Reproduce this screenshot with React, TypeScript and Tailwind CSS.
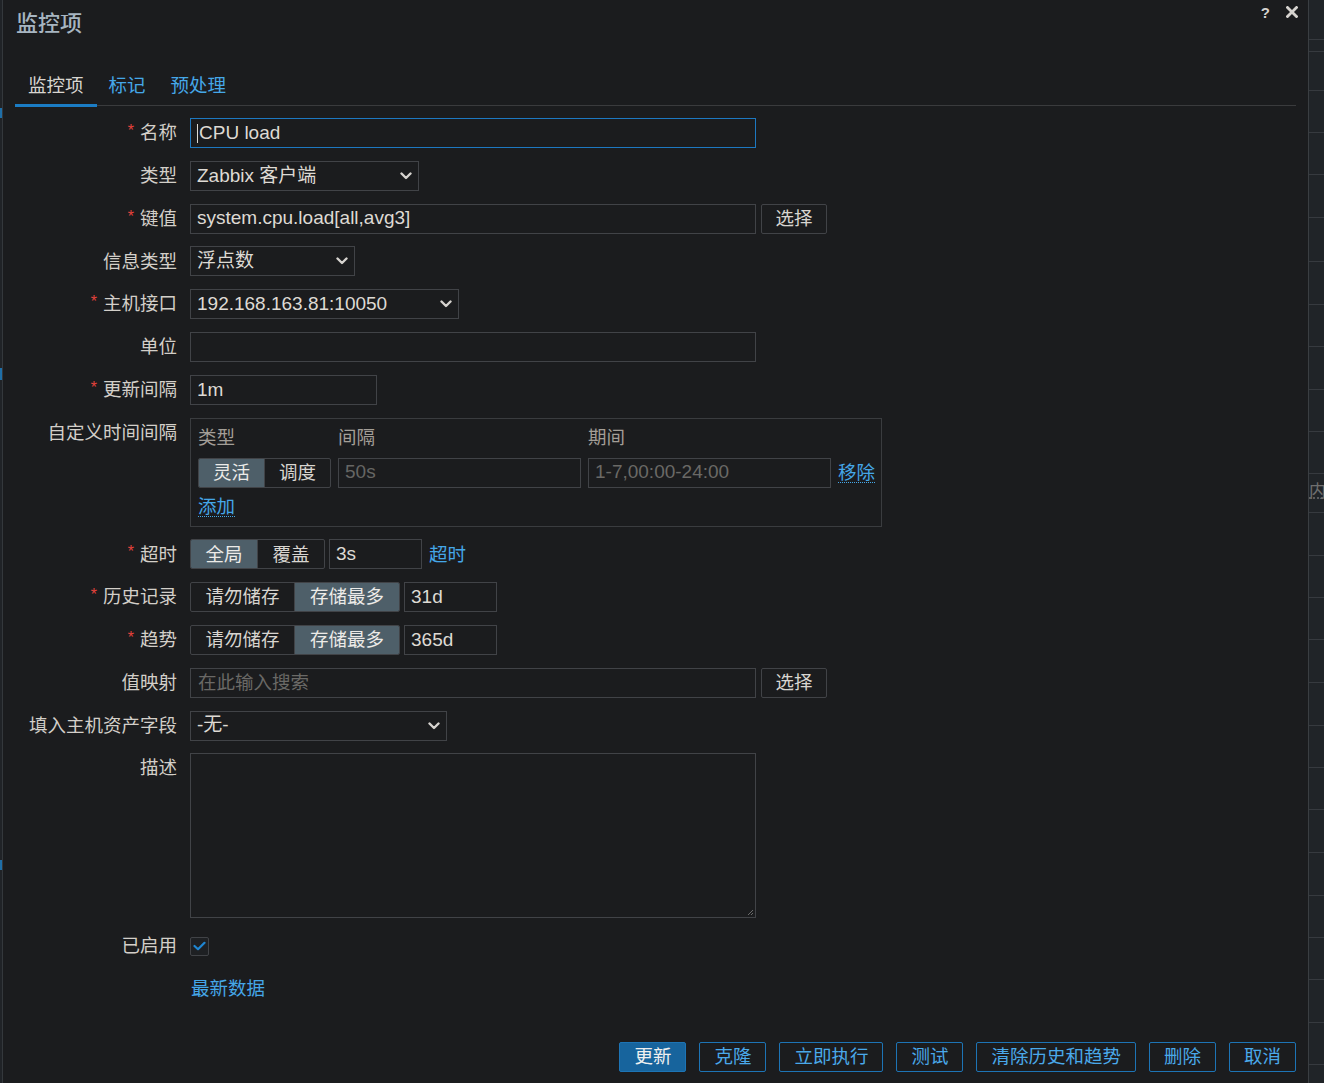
import React from "react";

const FONT = "font-['Liberation_Sans','Noto_Sans_CJK_SC',sans-serif]";

function Chevron() {
  return (
    <svg width="12" height="8" viewBox="0 0 12 8" className="shrink-0">
      <path d="M1.5 1.5 L6 6 L10.5 1.5" fill="none" stroke="#d6d3cf" strokeWidth="2.4" strokeLinecap="round" strokeLinejoin="round" />
    </svg>
  );
}

function Row({
  label,
  req,
  top,
  children,
}: {
  label: string;
  req?: boolean;
  top?: boolean;
  children: React.ReactNode;
}) {
  return (
    <div className={`flex ${top ? "items-start" : "items-center h-[30px]"} shrink-0`}>
      <div className="w-[174px] h-[30px] shrink-0 flex items-center justify-end text-[18.5px] text-[#d3cfc9] whitespace-nowrap">
        {req && <span className="text-[#e5423c] mr-[6px] text-[16px] relative top-[-2px]">*</span>}
        {label}
      </div>
      <div className="ml-[13px] flex items-center">{children}</div>
    </div>
  );
}

function Seg({ items, sel, widths }: { items: string[]; sel: number; widths: string[] }) {
  return (
    <div className="flex h-[30px] border border-[#414347] rounded-[2px] overflow-hidden">
      {items.map((t, i) => (
        <div
          key={t}
          className={`${widths[i]} h-full flex items-center justify-center text-[18.5px] whitespace-nowrap ${
            i === sel ? "bg-[#4e5f69] text-[#ecebe8]" : "text-[#d8d5d0]"
          } ${i > 0 ? "border-l border-[#414347]" : ""}`}
        >
          {t}
        </div>
      ))}
    </div>
  );
}

function Btn({ children }: { children: React.ReactNode }) {
  return (
    <div className="ml-[5px] w-[66px] h-[30px] border border-[#414347] rounded-[2px] flex items-center justify-center text-[18.5px] text-[#d8d5d0] whitespace-nowrap">
      {children}
    </div>
  );
}

const stripRows = [40, 12, 39, 42, 42, 43, 44, 43, 42, 43, 42, 42, 39, 43, 42, 42, 43, 43, 42, 42, 43, 43, 42, 42, 43, 42];

export default function App() {
  return (
    <div className={`w-[1324px] h-[1083px] flex bg-[#1b1c1e] overflow-hidden ${FONT}`}>
      {/* left page strip */}
      <div className="w-[3px] shrink-0 flex flex-col border-r border-[#34383c] bg-[#202327]">
        <div className="h-[108px]" />
        <div className="h-[10px] bg-[#1f6fa8]" />
        <div className="h-[250px]" />
        <div className="h-[12px] bg-[#1f6fa8]" />
        <div className="h-[480px]" />
        <div className="h-[10px] bg-[#1f6fa8]" />
      </div>

      {/* dialog */}
      <div className="flex-1 flex flex-col relative">
        {/* header */}
        <div className="h-[50px] flex items-start pl-[13px] pt-[9px]">
          <div className="text-[22px] leading-[30px] font-medium text-[#a7b5c1]">监控项</div>
        </div>
        <div className="absolute top-[5px] right-[38px] text-[15px] font-bold leading-[15px] text-[#d6d3cf]">?</div>
        <svg className="absolute top-[6px] right-[10px]" width="12" height="12" viewBox="0 0 12 12">
          <path d="M1.5 1.5 L10.5 10.5 M10.5 1.5 L1.5 10.5" stroke="#d6d3cf" strokeWidth="2.8" strokeLinecap="square" />
        </svg>

        {/* tabs */}
        <div className="mt-[13px] mx-[12px] flex items-end border-b border-[#3a3b3d]">
          <div className="h-[44px] px-[13px] pt-[11px] text-[18.5px] leading-[24px] text-[#d8d5d0] border-b-[3px] border-[#1b7cc4] mb-[-2px]">
            监控项
          </div>
          <div className="h-[42px] px-[12px] pt-[11px] text-[18.5px] leading-[24px] text-[#45a7e8]">标记</div>
          <div className="h-[42px] px-[13px] pt-[11px] text-[18.5px] leading-[24px] text-[#45a7e8]">预处理</div>
        </div>

        {/* form */}
        <div className="mt-[12px] flex flex-col gap-[12.8px]">
          <Row label="名称" req>
            <div className="w-[566px] h-[30px] border border-[#1d78c0] px-[6px] flex items-center text-[19px] text-[#dedad4]">
              <span className="w-[1px] h-[19px] bg-[#dedad4] mr-[1px]" />
              CPU load
            </div>
          </Row>
          <Row label="类型">
            <div className="w-[229px] h-[30px] border border-[#414347] pl-[6px] pr-[6px] flex items-center justify-between text-[19px] text-[#dedad4]">
              <span>Zabbix 客户端</span>
              <Chevron />
            </div>
          </Row>
          <Row label="键值" req>
            <div className="w-[566px] h-[30px] border border-[#414347] px-[6px] flex items-center text-[19px] text-[#dedad4]">
              system.cpu.load[all,avg3]
            </div>
            <Btn>选择</Btn>
          </Row>
          <Row label="信息类型">
            <div className="w-[165px] h-[30px] border border-[#414347] pl-[6px] pr-[6px] flex items-center justify-between text-[19px] text-[#dedad4]">
              <span>浮点数</span>
              <Chevron />
            </div>
          </Row>
          <Row label="主机接口" req>
            <div className="w-[269px] h-[30px] border border-[#414347] pl-[6px] pr-[6px] flex items-center justify-between text-[19px] text-[#dedad4]">
              <span>192.168.163.81:10050</span>
              <Chevron />
            </div>
          </Row>
          <Row label="单位">
            <div className="w-[566px] h-[30px] border border-[#414347]" />
          </Row>
          <Row label="更新间隔" req>
            <div className="w-[187px] h-[30px] border border-[#414347] px-[6px] flex items-center text-[19px] text-[#dedad4]">
              1m
            </div>
          </Row>
          <Row label="自定义时间间隔" top>
            <div className="w-[692px] h-[109px] border border-[#3a3c3f] px-[7px] pt-[7px] pb-[7px]">
              <div className="grid grid-cols-[133px_243px_243px_auto] gap-x-[7px] items-center">
                <div className="h-[24px] flex items-center text-[18.5px] text-[#a39e97]">类型</div>
                <div className="h-[24px] flex items-center text-[18.5px] text-[#a39e97]">间隔</div>
                <div className="h-[24px] flex items-center text-[18.5px] text-[#a39e97]">期间</div>
                <div />
                <div className="mt-[8px]">
                  <Seg items={["灵活", "调度"]} sel={0} widths={["w-[66px]", "w-[67px]"]} />
                </div>
                <div className="mt-[8px] h-[30px] border border-[#414347] px-[6px] flex items-center text-[19px] text-[#666664]">
                  50s
                </div>
                <div className="mt-[8px] h-[30px] border border-[#414347] px-[6px] flex items-center text-[19px] text-[#6a6966]">
                  1-7,00:00-24:00
                </div>
                <div className="mt-[8px] h-[30px] flex items-center whitespace-nowrap text-[18.5px] text-[#45a7e8] underline decoration-dotted decoration-1 underline-offset-[3px]">
                  移除
                </div>
              </div>
              <div className="mt-[7px] h-[24px] flex items-center text-[18.5px] text-[#45a7e8] underline decoration-dotted decoration-1 underline-offset-[3px]">
                添加
              </div>
            </div>
          </Row>
          <Row label="超时" req>
            <Seg items={["全局", "覆盖"]} sel={0} widths={["w-[66px]", "w-[67px]"]} />
            <div className="ml-[4px] w-[93px] h-[30px] border border-[#414347] px-[6px] flex items-center text-[19px] text-[#dedad4]">
              3s
            </div>
            <div className="ml-[7px] text-[18.5px] text-[#45a7e8] whitespace-nowrap">超时</div>
          </Row>
          <Row label="历史记录" req>
            <Seg items={["请勿储存", "存储最多"]} sel={1} widths={["w-[103px]", "w-[105px]"]} />
            <div className="ml-[4px] w-[93px] h-[30px] border border-[#414347] px-[6px] flex items-center text-[19px] text-[#dedad4]">
              31d
            </div>
          </Row>
          <Row label="趋势" req>
            <Seg items={["请勿储存", "存储最多"]} sel={1} widths={["w-[103px]", "w-[105px]"]} />
            <div className="ml-[4px] w-[93px] h-[30px] border border-[#414347] px-[6px] flex items-center text-[19px] text-[#dedad4]">
              365d
            </div>
          </Row>
          <Row label="值映射">
            <div className="w-[566px] h-[30px] border border-[#414347] px-[7px] flex items-center text-[18.5px] text-[#6a6966]">
              在此输入搜索
            </div>
            <Btn>选择</Btn>
          </Row>
          <Row label="填入主机资产字段">
            <div className="w-[257px] h-[30px] border border-[#414347] pl-[6px] pr-[6px] flex items-center justify-between text-[19px] text-[#dedad4]">
              <span>-无-</span>
              <Chevron />
            </div>
          </Row>
          <Row label="描述" top>
            <div className="w-[566px] h-[165px] border border-[#414347] relative">
              <svg className="absolute right-[1px] bottom-[1px]" width="8" height="8" viewBox="0 0 8 8">
                <path d="M7 2 L2 7 M7 5 L5 7" stroke="#6a6a6a" strokeWidth="1" />
              </svg>
            </div>
          </Row>
          <Row label="已启用">
            <div className="w-[19px] h-[19px] border border-[#414347] rounded-[2px] bg-[#1e2023] flex items-center justify-center">
              <svg width="13" height="10" viewBox="0 0 13 10">
                <path d="M1.5 5 L5 8.2 L11.5 1.8" fill="none" stroke="#1f86d2" strokeWidth="2.2" strokeLinecap="round" strokeLinejoin="round" />
              </svg>
            </div>
          </Row>
          <Row label="">
            <div className="text-[18.5px] text-[#45a7e8] ml-[1px]">最新数据</div>
          </Row>
        </div>

        {/* footer buttons */}
        <div className="mt-[38px] flex justify-end gap-[13px] pr-[12px]">
          <div className="h-[30px] px-[14px] flex items-center border border-[#1d74b5] bg-[#17649d] rounded-[2px] text-[18.5px] text-[#f0f0f0] whitespace-nowrap">
            更新
          </div>
          {["克隆", "立即执行", "测试", "清除历史和趋势", "删除", "取消"].map((t) => (
            <div
              key={t}
              className="h-[30px] px-[14px] flex items-center border border-[#1d74b5] rounded-[2px] text-[18.5px] text-[#4aa9ea] whitespace-nowrap"
            >
              {t}
            </div>
          ))}
        </div>
      </div>

      {/* right page strip */}
      <div className="w-[16px] shrink-0 border-l border-[#3a3e42] bg-[#202428] flex flex-col overflow-hidden">
        {stripRows.map((h, i) => (
          <div key={i} className="border-b border-[#363a3f] shrink-0 relative overflow-hidden" style={{ height: h }}>
            {i === 12 && (
              <div className="absolute left-0 top-[8px] text-[17px] leading-[20px] text-[#6f6f6f] underline decoration-dotted">
                内
              </div>
            )}
          </div>
        ))}
      </div>
    </div>
  );
}
